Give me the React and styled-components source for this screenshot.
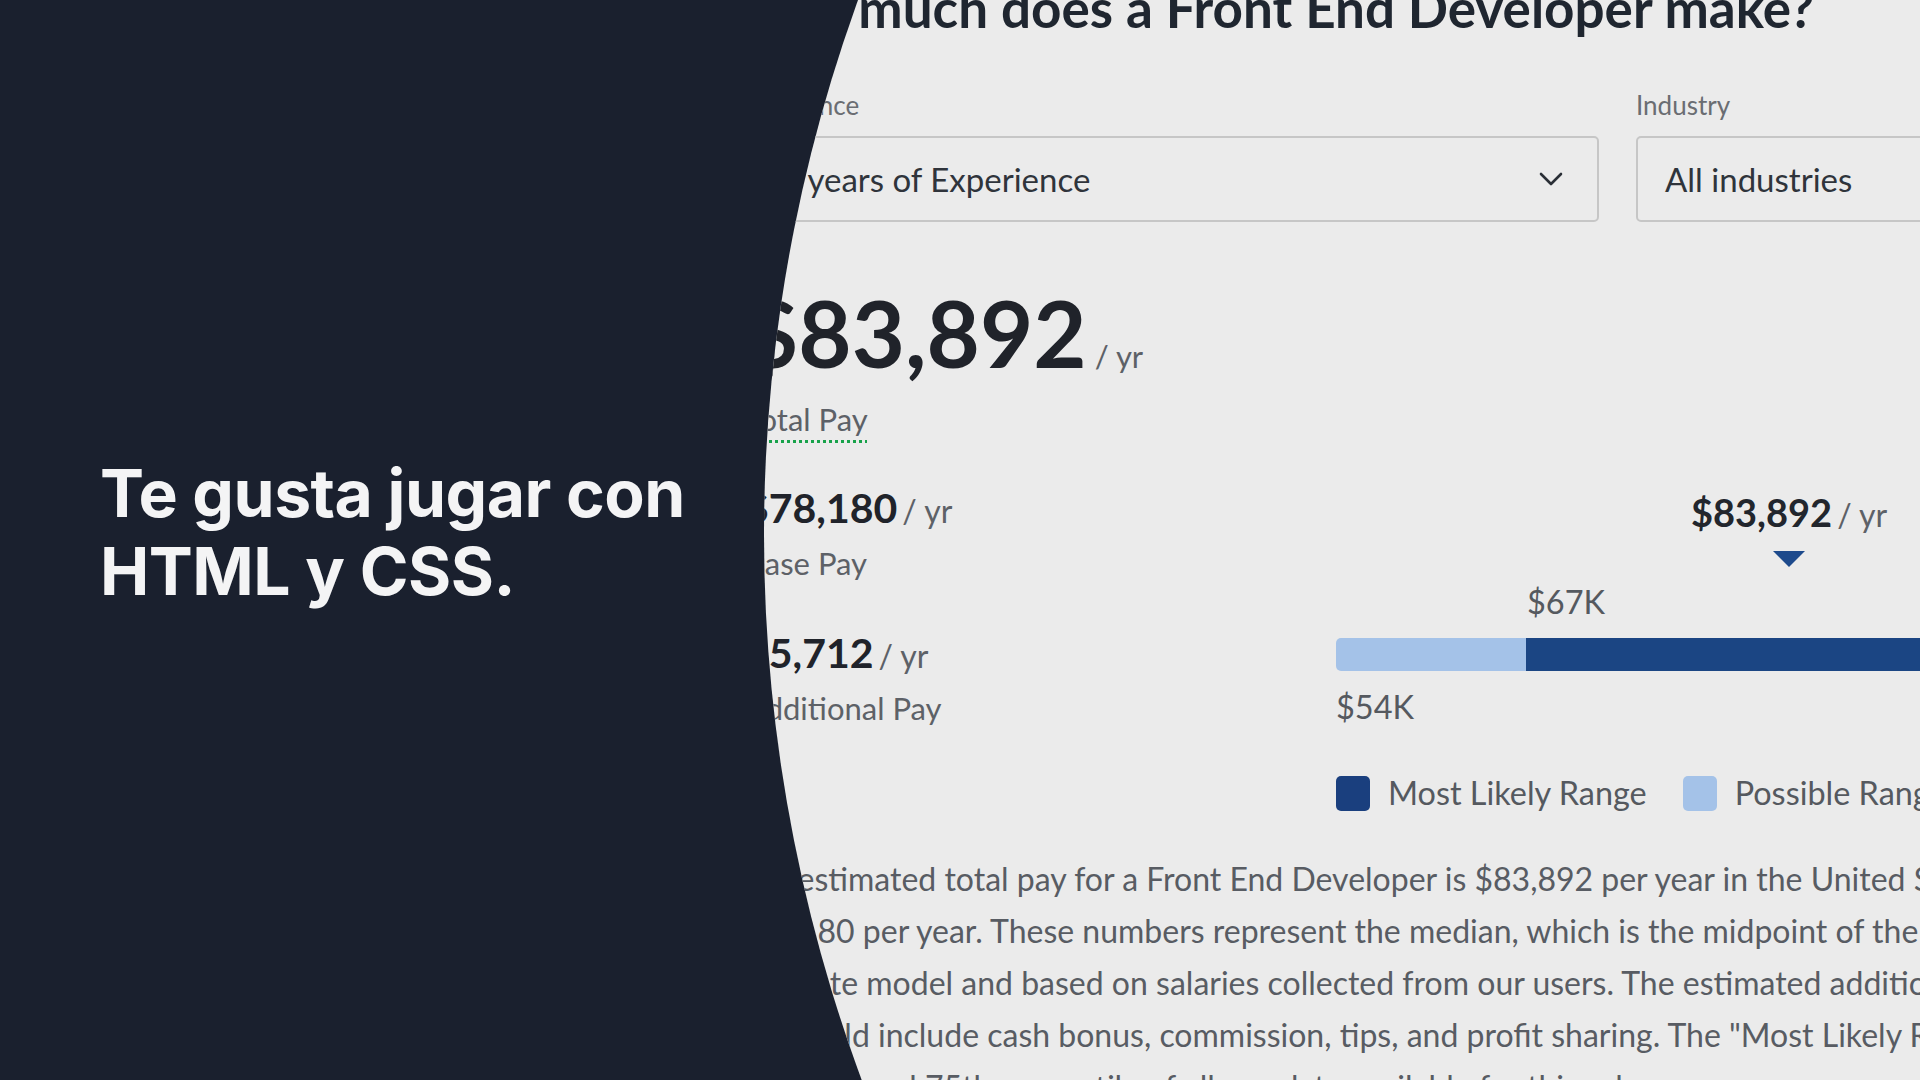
import React from 'react';
import styled, { createGlobalStyle } from 'styled-components';

const GlobalStyle = createGlobalStyle`
  html, body {
    margin: 0;
    padding: 0;
    background: #1a202e;
  }
  * { box-sizing: border-box; }
`;

const stats = [
  { value: '$78,180', label: 'Base Pay', gap: 47 },
  { value: '$5,712', label: 'Additional Pay', gap: 48 },
];

const copy = [
  'The estimated total pay for a Front End Developer is $83,892 per year in the United States area, with an average salary of',
  '$78,180 per year. These numbers represent the median, which is the midpoint of the ranges from our proprietary Total Pay',
  'Estimate model and based on salaries collected from our users. The estimated additional pay is $5,712 per year. Additional',
  'pay could include cash bonus, commission, tips, and profit sharing. The "Most Likely Range" represents values that exist within',
  'the 25th and 75th percentile of all pay data available for this role.',
];

const Page = styled.main`
  display: grid;
  grid-template-columns: 764px 1fr;
  width: 1920px;
  height: 1080px;
  overflow: hidden;
  background: #1a202e;
`;

const Hero = styled.section`
  display: flex;
  align-items: center;
  padding: 0 0 16px 100px;
`;

const HeroTitle = styled.h1`
  margin: 0;
  font-family: Inter, Lato, sans-serif;
  font-weight: 700;
  font-size: 66px;
  line-height: 78px;
  letter-spacing: -0.5px;
  color: #f4f4f5;
`;

const Sheet = styled.section`
  background: #ebebeb;
  overflow: hidden;
  clip-path: circle(1569px at 1569px 535px);
  font-family: Lato, 'Open Sans', sans-serif;
`;

const Content = styled.div`
  margin-left: -19px;
  width: 1800px;
`;

const Heading = styled.h2`
  margin: -24px 0 0 -11px;
  font-size: 53px;
  line-height: 64px;
  font-weight: 700;
  color: #1f2630;
  white-space: nowrap;
`;

const Filters = styled.div`
  display: grid;
  grid-template-columns: 866px 866px;
  gap: 37px;
  margin: 49px 0 0 -12px;
`;

const Field = styled.div`
  display: flex;
  flex-direction: column;
  gap: 15px;
`;

const FieldLabel = styled.span`
  font-size: 26px;
  line-height: 32px;
  color: #6a6d72;
`;

const Select = styled.div`
  display: flex;
  align-items: center;
  justify-content: space-between;
  height: 86px;
  padding: 0 34px 0 27px;
  border: 2px solid #c6c6c6;
  border-radius: 5px;
  font-size: 33px;
  color: #2f343b;
`;

const Summary = styled.div`
  display: grid;
  grid-template-columns: 591px 900px;
  margin-top: 67px;
`;

const Stats = styled.div`
  display: flex;
  flex-direction: column;
`;

const Amount = styled.div`
  display: flex;
  align-items: baseline;
  gap: ${({ $size }) => ($size > 60 ? 8 : 5)}px;
  margin-top: ${({ $gap }) => $gap || 0}px;
  font-size: ${({ $size }) => $size}px;
  line-height: ${({ $lh }) => $lh}px;
  font-weight: 700;
  color: #20232a;
  white-space: nowrap;
`;

const PerYear = styled.span`
  font-size: ${({ $size }) => $size}px;
  line-height: 1;
  font-weight: 400;
  color: #5d6167;
`;

const StatLabel = styled.span`
  display: block;
  margin-top: ${({ $gap }) => $gap}px;
  font-size: 31px;
  line-height: 36px;
  color: #5d6167;
  white-space: nowrap;
`;

const Dotted = styled.span`
  text-decoration: underline dotted #17a24a;
  text-decoration-thickness: 3px;
  text-underline-offset: 9px;
`;

const Chart = styled.div`
  display: flex;
  flex-direction: column;
  padding-top: 199px;
`;

const Marker = styled.div`
  display: inline-flex;
  flex-direction: column;
  align-items: center;
  align-self: flex-start;
  gap: 15px;
  margin-left: ${({ $offset }) => $offset}px;
`;

const MarkerValue = styled.div`
  display: flex;
  align-items: baseline;
  gap: 5px;
  font-size: 38px;
  line-height: 48px;
  font-weight: 700;
  color: #22262d;
  white-space: nowrap;
`;

const Arrow = styled.span`
  width: 0;
  height: 0;
  border-left: 16px solid transparent;
  border-right: 16px solid transparent;
  border-top: 16px solid #1d4a8c;
`;

const Tick = styled.div`
  margin: ${({ $top }) => $top}px 0 0 ${({ $offset }) => $offset}px;
  font-size: 32.5px;
  line-height: 38px;
  color: #55595f;
`;

const Bar = styled.div`
  display: flex;
  height: 33px;
  margin-top: 17px;
  border-radius: 5px 0 0 5px;
  overflow: hidden;
`;

const Segment = styled.div`
  flex: ${({ $grow }) => ($grow ? 1 : 'none')};
  background: ${({ $tone }) => ($tone === 'dark' ? '#1b4583' : '#a4c2e8')};
`;

const Legend = styled.div`
  display: flex;
  align-items: center;
  gap: 36px;
  margin-top: 49px;
`;

const LegendItem = styled.div`
  display: flex;
  align-items: center;
  gap: 18px;
  font-size: 32.4px;
  line-height: 36px;
  color: #55595f;
  white-space: nowrap;
`;

const Swatch = styled.span`
  width: 34px;
  height: 35px;
  border-radius: 5px;
  background: ${({ $tone }) => ($tone === 'dark' ? '#1a3f7e' : '#a4c2e8')};
`;

const Copy = styled.p`
  margin: 42px 0 0 -9px;
  font-size: 32px;
  line-height: 52px;
  color: #585c63;
`;

const CopyLine = styled.span`
  display: block;
  white-space: nowrap;
`;

const Chevron = () => (
  <svg width="24" height="14" viewBox="0 0 24 14" fill="none">
    <polyline points="2,2 12,12 22,2" stroke="#2a2f36" strokeWidth="2.6" strokeLinecap="round" strokeLinejoin="round" />
  </svg>
);

const App = () => {
  const barWidth = 900;
  const possibleEnd = 190;
  const median = 454;

  return (
    <>
      <GlobalStyle />
      <Page>
        <Hero>
          <HeroTitle>
            Te gusta jugar con
            <br />
            HTML y CSS.
          </HeroTitle>
        </Hero>
        <Sheet>
          <Content>
            <Heading>How much does a Front End Developer make?</Heading>
            <Filters>
              <Field>
                <FieldLabel>Experience</FieldLabel>
                <Select>
                  All years of Experience
                  <Chevron />
                </Select>
              </Field>
              <Field>
                <FieldLabel>Industry</FieldLabel>
                <Select>All industries</Select>
              </Field>
            </Filters>
            <Summary>
              <Stats>
                <Amount $size={92} $lh={88}>
                  $83,892<PerYear $size={31}>/ yr</PerYear>
                </Amount>
                <StatLabel $gap={24}>
                  <Dotted>Total Pay</Dotted>
                </StatLabel>
                {stats.map((s) => (
                  <React.Fragment key={s.label}>
                    <Amount $size={41} $lh={48} $gap={s.gap}>
                      {s.value}<PerYear $size={32}>/ yr</PerYear>
                    </Amount>
                    <StatLabel $gap={13}>{s.label}</StatLabel>
                  </React.Fragment>
                ))}
              </Stats>
              <Chart style={{ width: barWidth }}>
                <Marker $offset={median - 99}>
                  <MarkerValue>
                    $83,892<PerYear $size={32}>/ yr</PerYear>
                  </MarkerValue>
                  <Arrow />
                </Marker>
                <Tick $top={16} $offset={possibleEnd + 1}>$67K</Tick>
                <Bar>
                  <Segment $tone="light" style={{ width: possibleEnd }} />
                  <Segment $tone="dark" $grow />
                </Bar>
                <Tick $top={17} $offset={0}>$54K</Tick>
                <Legend>
                  <LegendItem>
                    <Swatch $tone="dark" />
                    Most Likely Range
                  </LegendItem>
                  <LegendItem>
                    <Swatch $tone="light" />
                    Possible Range
                  </LegendItem>
                </Legend>
              </Chart>
            </Summary>
            <Copy>
              {copy.map((line) => (
                <CopyLine key={line}>{line}</CopyLine>
              ))}
            </Copy>
          </Content>
        </Sheet>
      </Page>
    </>
  );
};

export default App;
